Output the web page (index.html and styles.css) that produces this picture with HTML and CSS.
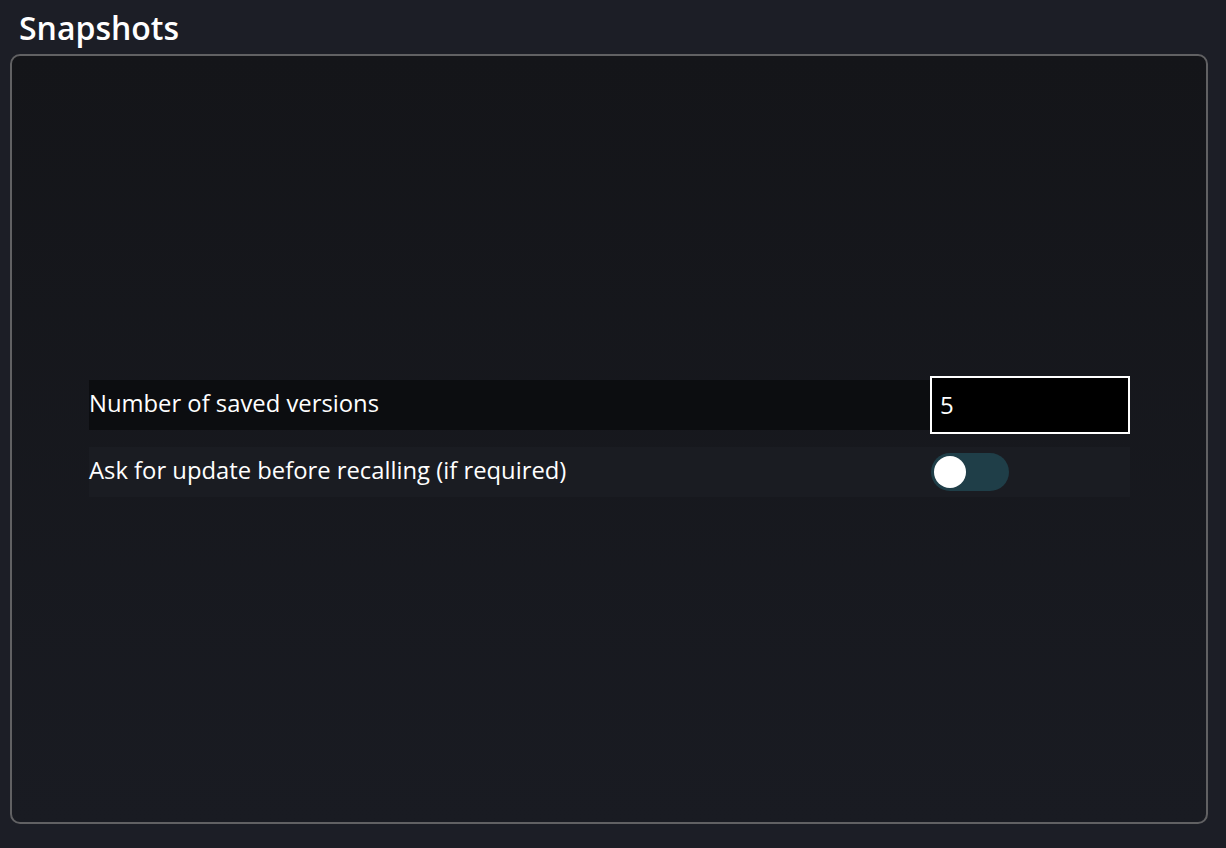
FILE: index.html
```
<html>
<head>
    <link rel="stylesheet" href="styles.css">
</head>
<body>
    <h1 class="pageTitle">Snapshots</h1>
    <div class="panel">
        <div class="settings">
            <div class="settingRow">
                <span class="settingLabel dark">Number of saved versions</span>
                <input type="text" class="numberInput" value="5" />
            </div>
            <div class="settingRow lite">
                <span class="settingLabel">Ask for update before recalling (if required)</span>
                <div class="toggleCell">
                    <span class="toggle"><span class="knob"></span></span>
                </div>
            </div>
        </div>
    </div>
</body>
</html>
```
FILE: styles.css
```
html, body {
    margin: 0;
    height: 100%;
}

body {
    background-color: #1c1e26;
    color: #ffffff;
    font-family: "Open Sans", "Noto Sans", sans-serif;
    display: flex;
    flex-direction: column;
}

.pageTitle {
    margin: 0;
    padding: 8px 0 0 19px;
    height: 54px;
    box-sizing: border-box;
    font-size: 32px;
    font-weight: 600;
    line-height: 40px;
}

.panel {
    margin: 0 18px 24px 10px;
    height: 770px;
    box-sizing: border-box;
    border: 2px solid #616163;
    border-radius: 10px;
    background: linear-gradient(to bottom, #141519, #191b22);
    display: flex;
    align-items: center;
    justify-content: center;
}

.settings {
    width: 1041px;
    margin-bottom: 6px;
    margin-left: 1px;
}

.settingRow {
    display: flex;
    align-items: center;
    min-height: 50px;
}

    .settingRow + .settingRow {
        margin-top: 13px;
    }

    .settingRow.lite {
        background-color: #1a1c22;
    }

.settingLabel {
    flex: 1;
    height: 50px;
    line-height: 47px;
    font-size: 23.8px;
}

    .settingLabel.dark {
        background-color: #0c0d10;
    }

.numberInput {
    width: 200px;
    height: 58px;
    box-sizing: border-box;
    border: 2px solid #ffffff;
    background-color: #000000;
    color: #ffffff;
    font-family: "Open Sans", "Noto Sans", sans-serif;
    font-size: 24px;
    padding: 0 8px;
    outline: none;
}

.toggleCell {
    width: 200px;
    height: 50px;
    display: flex;
    align-items: center;
}

.toggle {
    width: 78px;
    height: 38px;
    margin-left: 1px;
    border-radius: 19px;
    background-color: #1f3e48;
    position: relative;
}

    .toggle .knob {
        position: absolute;
        left: 3px;
        top: 3px;
        width: 32px;
        height: 32px;
        border-radius: 50%;
        background-color: #ffffff;
    }
```
